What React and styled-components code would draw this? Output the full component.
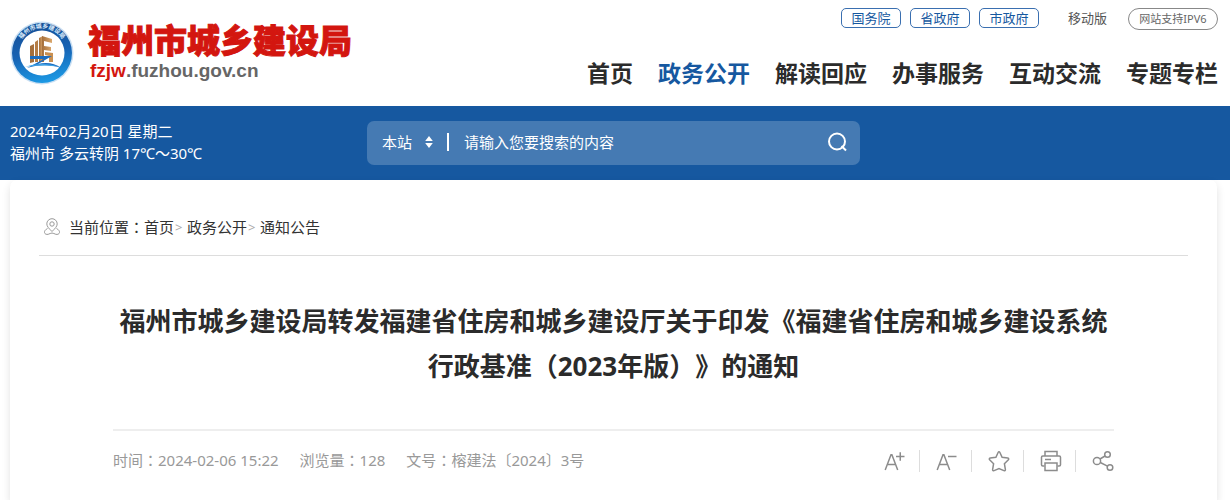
import React, { useState } from "react";
import styled, { createGlobalStyle } from "styled-components";

const departments = ["国务院", "省政府", "市政府"];

const menu = ["首页", "政务公开", "解读回应", "办事服务", "互动交流", "专题专栏"];

const crumbs = ["首页", "政务公开", "通知公告"];

const meta = [
  { label: "时间", value: "2024-02-06 15:22" },
  { label: "浏览量", value: "128" },
  { label: "文号", value: "榕建法〔2024〕3号" },
];

const Emblem = () => (
  <svg width="64" height="64" viewBox="0 0 64 64" aria-hidden="true">
    <defs>
      <linearGradient id="ring" x1="0.4" y1="0" x2="0.6" y2="1">
        <stop offset="0" stopColor="#164f96" />
        <stop offset="0.5" stopColor="#1763b4" />
        <stop offset="1" stopColor="#1c9be6" />
      </linearGradient>
      <linearGradient id="tower" x1="0" y1="0" x2="1" y2="0">
        <stop offset="0" stopColor="#a56f3c" />
        <stop offset="1" stopColor="#dba86c" />
      </linearGradient>
      <path id="arc" d="M8.500 36a24 24 0 1 1 47 0" />
    </defs>
    <circle cx="32" cy="32" r="31.500" fill="#c9dff3" />
    <circle cx="32" cy="32" r="30" fill="url(#ring)" />
    <circle cx="32" cy="32" r="22.500" fill="#fff" />
    <text fill="#dcebfa" fontSize="6" fontWeight="700">
      <textPath href="#arc" startOffset="50%" textAnchor="middle">
        福州市城乡建设局
      </textPath>
    </text>
    <path d="M20 25l4-2v18l-4 1z" fill="#a56f3c" />
    <path d="M25 21l3-2v22h-3z" fill="#b57d46" />
    <path d="M29 17l4-2v26h-4z" fill="url(#tower)" />
    <path d="M32 15l10 3v4l-8-2v5l7 1v4l-7-1v12h-2z" fill="url(#tower)" />
    <path d="M35 31l8 1v9h-4v-6l-4-1z" fill="#c98f50" />
    <path d="M20 35h22l-14 8c8-2 17-1 23 4-9-3-20-4-34 0l17-9H20z" fill="#1c6dc0" />
    <path d="M15 46c10-4 24-4 35 0-11-2-24-2-35 0z" fill="#3fa5e8" />
  </svg>
);

const PinIcon = () => (
  <svg
    width="18"
    height="18"
    viewBox="0 0 18 18"
    fill="none"
    stroke="#999"
    aria-hidden="true"
  >
    <path d="M9 13.500C6 10.500 3.800 8.500 3.800 5.900a5.200 5.200 0 0 1 10.400 0c0 2.600-2.200 4.600-5.200 7.600z" />
    <circle cx="9" cy="6" r="2.200" />
    <path d="M4.500 10.500C2.500 11.500 1.300 13 1.500 14.500c.2 1.600 2 2.200 3.700 1.800 1.500-.4 2.500-1.300 3.800-1.300s2.300.9 3.800 1.300c1.700.4 3.500-.2 3.700-1.800.2-1.500-1-3-3-4" />
  </svg>
);

const SearchIcon = () => (
  <svg
    width="22"
    height="22"
    viewBox="0 0 22 22"
    fill="none"
    stroke="#fff"
    strokeWidth="2"
    aria-hidden="true"
  >
    <circle cx="11" cy="10.500" r="8" />
    <path d="M15.500 15l4.500 4.500" />
  </svg>
);

const ArrowsIcon = () => (
  <svg width="8" height="12" viewBox="0 0 8 12" fill="#fff" aria-hidden="true">
    <path d="M4 0l3.800 5H.2zM4 12L.2 7h7.600z" />
  </svg>
);

const LargerIcon = () => (
  <ToolIcon>
    <path d="M1.200 20L7 4.800h.9L13.700 20M3.500 14.500h8" />
    <path d="M12 6.500h8.500M16.250 2.200v8.500" />
  </ToolIcon>
);

const SmallerIcon = () => (
  <ToolIcon>
    <path d="M1.200 20L7 4.800h.9L13.700 20M3.500 14.500h8" />
    <path d="M12 6.500h8.500" />
  </ToolIcon>
);

const StarIcon = () => (
  <ToolIcon>
    <path d="M11 1.800c.4 0 .7.300.9.700l2.200 4.700 5.700.8c.9.100 1.200 1.100.6 1.700l-4 4 1 5.900c.1.900-.7 1.300-1.500 1L11 18.500l-4.900 2.100c-.8.300-1.600-.1-1.500-1l1-5.900-4-4C1 9.100 1.300 8.100 2.200 8l5.700-.8 2.200-4.700c.2-.4.500-.7.900-.7z" />
  </ToolIcon>
);

const PrintIcon = () => (
  <ToolIcon>
    <path d="M5 6V1.500h12V6" />
    <path d="M4.500 16H2.800C1.900 16 1.500 15.500 1.500 14.800V7.300C1.500 6.500 2 6 2.800 6h16.400c.8 0 1.300.5 1.300 1.300v7.500c0 .7-.4 1.200-1.300 1.200h-1.700" />
    <path d="M5 13h12v7.500H5zM5 9.500h6" />
  </ToolIcon>
);

const ShareIcon = () => (
  <ToolIcon>
    <circle cx="5" cy="11" r="3.600" />
    <circle cx="15.500" cy="4.500" r="2.800" />
    <circle cx="18" cy="17.500" r="2.800" />
    <path d="M8 9l5-3M8.300 12.500l7.200 3.700" />
  </ToolIcon>
);

const tools = [
  { name: "放大字号", Icon: LargerIcon },
  { name: "缩小字号", Icon: SmallerIcon },
  { name: "收藏", Icon: StarIcon },
  { name: "打印", Icon: PrintIcon },
  { name: "分享", Icon: ShareIcon },
];

const App = () => {
  const [keyword, setKeyword] = useState("");

  return (
    <Page>
      <GlobalStyle />
      <Header>
        <Brand href="#">
          <Emblem />
          <BrandText>
            <BrandName>福州市城乡建设局</BrandName>
            <BrandUrl>
              <b>fzjw</b>.fuzhou.gov.cn
            </BrandUrl>
          </BrandText>
        </Brand>
        <HeaderSide>
          <TopLinks>
            {departments.map((item) => (
              <Department href="#" key={item}>
                {item}
              </Department>
            ))}
            <MobileLink href="#">移动版</MobileLink>
            <Ipv6 href="#">网站支持IPV6</Ipv6>
          </TopLinks>
          <Menu>
            {menu.map((item) => (
              <MenuLink href="#" key={item} $active={item === "政务公开"}>
                {item}
              </MenuLink>
            ))}
          </Menu>
        </HeaderSide>
      </Header>

      <Banner>
        <Weather>
          <p>2024年02月20日 星期二</p>
          <p>福州市 多云转阴 17℃～30℃</p>
        </Weather>
        <SearchForm onSubmit={(e) => e.preventDefault()}>
          <Scope>
            <ScopeSelect aria-label="搜索范围">
              <option>本站</option>
            </ScopeSelect>
            <ArrowsIcon />
          </Scope>
          <SearchInput
            aria-label="搜索"
            placeholder="请输入您要搜索的内容"
            value={keyword}
            onChange={(e) => setKeyword(e.target.value)}
          />
          <SearchButton type="submit" aria-label="搜索">
            <SearchIcon />
          </SearchButton>
        </SearchForm>
      </Banner>

      <Card>
        <Breadcrumb>
          <PinIcon />
          <CrumbLabel>
            当前位置<Colon>：</Colon>
          </CrumbLabel>
          {crumbs.map((item, i) => (
            <React.Fragment key={item}>
              {i > 0 && <Separator>&gt;</Separator>}
              <a href="#">{item}</a>
            </React.Fragment>
          ))}
        </Breadcrumb>
        <Article>
          <Title>
            福州市城乡建设局转发福建省住房和城乡建设厅关于印发《福建省住房和城乡建设系统行政基准（2023年版）》的通知
          </Title>
          <InfoBar>
            <MetaList>
              {meta.map((item) => (
                <li key={item.label}>
                  {item.label}
                  <Colon>：</Colon>
                  {item.value}
                </li>
              ))}
            </MetaList>
            <Tools>
              {tools.map(({ name, Icon }) => (
                <ToolButton type="button" aria-label={name} key={name}>
                  <Icon />
                </ToolButton>
              ))}
            </Tools>
          </InfoBar>
        </Article>
      </Card>
    </Page>
  );
};

export default App;

const GlobalStyle = createGlobalStyle`
  * {
    box-sizing: border-box;
  }

  body {
    margin: 0;
    background: #fff;
    color: #333;
    font-family: "Noto Sans", "Noto Sans CJK SC", sans-serif;
    font-size: 15px;
    line-height: 22px;
    text-spacing-trim: space-all;
  }

  a {
    color: inherit;
    text-decoration: none;
  }

  p {
    margin: 0;
  }

  button, input, select {
    padding: 0;
    border: 0;
    background: none;
    color: inherit;
    font: inherit;
    outline: none;
  }
`;

const Page = styled.div`
  display: flex;
  flex-direction: column;
  min-height: 100vh;
`;

const Header = styled.header`
  display: flex;
  justify-content: space-between;
  height: 106px;
  padding: 0 12px 0 10px;
`;

const Brand = styled.a`
  display: flex;
  align-items: center;
  gap: 14px;
`;

const BrandText = styled.span`
  display: flex;
  flex-direction: column;
`;

const BrandName = styled.strong`
  color: #d3160f;
  font-family: "Liberation Sans", "Noto Sans CJK SC", sans-serif;
  font-size: 33px;
  font-weight: 900;
  line-height: 36px;
  -webkit-text-stroke: 1px #d3160f;
`;

const BrandUrl = styled.span`
  padding-left: 2px;
  color: #666;
  font-family: "Liberation Sans", sans-serif;
  font-size: 19px;
  font-weight: 700;
  line-height: 22px;

  b {
    color: #d3160f;
  }
`;

const HeaderSide = styled.div`
  display: flex;
  flex-direction: column;
  align-items: flex-end;
  gap: 27px;
  padding-top: 8px;
`;

const TopLinks = styled.div`
  display: flex;
  font-size: 13px;
  line-height: 18px;
`;

const Department = styled.a`
  width: 60px;
  height: 20px;
  margin-right: 9px;
  border: 1px solid #3a6fb0;
  border-radius: 5px;
  color: #1658a0;
  text-align: center;
`;

const MobileLink = styled.a`
  margin: 0 21px 0 20px;
  line-height: 20px;
  color: #555;
`;

const Ipv6 = styled.a`
  width: 90px;
  height: 22px;
  border: 1px solid #888;
  border-radius: 11px;
  color: #666;
  font-size: 11px;
  line-height: 20px;
  text-align: center;
`;

const Menu = styled.nav`
  display: flex;
  gap: 25px;
`;

const MenuLink = styled.a`
  color: ${({ $active }) => ($active ? "#1658a0" : "#2b2b2b")};
  font-size: 23px;
  font-weight: 700;
  line-height: 32px;
`;

const Banner = styled.section`
  display: grid;
  grid-template-columns: 357px minmax(0, 493px);
  align-items: center;
  height: 74px;
  padding: 0 10px;
  background: #1658a0;
  color: #fff;
`;

const Weather = styled.div`
  padding-bottom: 2px;
`;

const SearchForm = styled.form`
  display: flex;
  align-items: center;
  height: 44px;
  padding: 0 12px 2px 15px;
  border-radius: 7px;
  background: #457ab3;
`;

const Scope = styled.div`
  display: flex;
  align-items: center;
  gap: 12px;
  height: 18px;
  padding-right: 14px;
  border-right: 2px solid #fff;
`;

const ScopeSelect = styled.select`
  width: 31px;
  appearance: none;
`;

const SearchInput = styled.input`
  flex: 1;
  min-width: 0;
  padding-left: 15px;

  &::placeholder {
    color: #fff;
    opacity: 1;
  }
`;

const SearchButton = styled.button`
  display: flex;
  cursor: pointer;
`;

const Card = styled.main`
  flex: 1;
  margin: 0 13px 0 10px;
  padding: 0 29px;
  border-radius: 7px 7px 0 0;
  background: #fff;
  box-shadow: 0 4px 8px rgba(0, 0, 0, 0.12);
`;

const Breadcrumb = styled.nav`
  display: flex;
  align-items: center;
  height: 76px;
  padding: 18px 4px 0;
  border-bottom: 1px solid #ddd;
`;

const CrumbLabel = styled.span`
  margin-left: 8px;
`;

// the TC face keeps the full-width colon in the middle of its cell
const Colon = styled.span`
  font-family: "Noto Sans CJK TC", sans-serif;
`;

const Separator = styled.span`
  width: 13px;
  padding-left: 1px;
  color: #aaa;
  font-size: 13px;
`;

const Article = styled.article`
  padding: 43px 74px 0;
`;

const Title = styled.h1`
  margin: 0;
  padding-bottom: 40px;
  border-bottom: 2px solid #eee;
  color: #2b2b2b;
  font-size: 26px;
  line-height: 45px;
  text-align: center;
`;

const InfoBar = styled.div`
  display: flex;
  align-items: center;
  justify-content: space-between;
  height: 60px;
  color: #999;
`;

const MetaList = styled.ul`
  display: flex;
  gap: 21px;
  margin: 0;
  padding: 0 0 2px;
  list-style: none;
`;

const Tools = styled.div`
  display: flex;
`;

const ToolButton = styled.button`
  display: flex;
  cursor: pointer;

  & + & {
    margin-left: 13px;
    padding-left: 16px;
    border-left: 1px solid #ddd;
  }
`;

const ToolIcon = styled.svg.attrs({
  width: 22,
  height: 22,
  viewBox: "0 0 22 22",
  "aria-hidden": true,
})`
  fill: none;
  stroke: #8c8c8c;
  stroke-width: 1.5;
`;
